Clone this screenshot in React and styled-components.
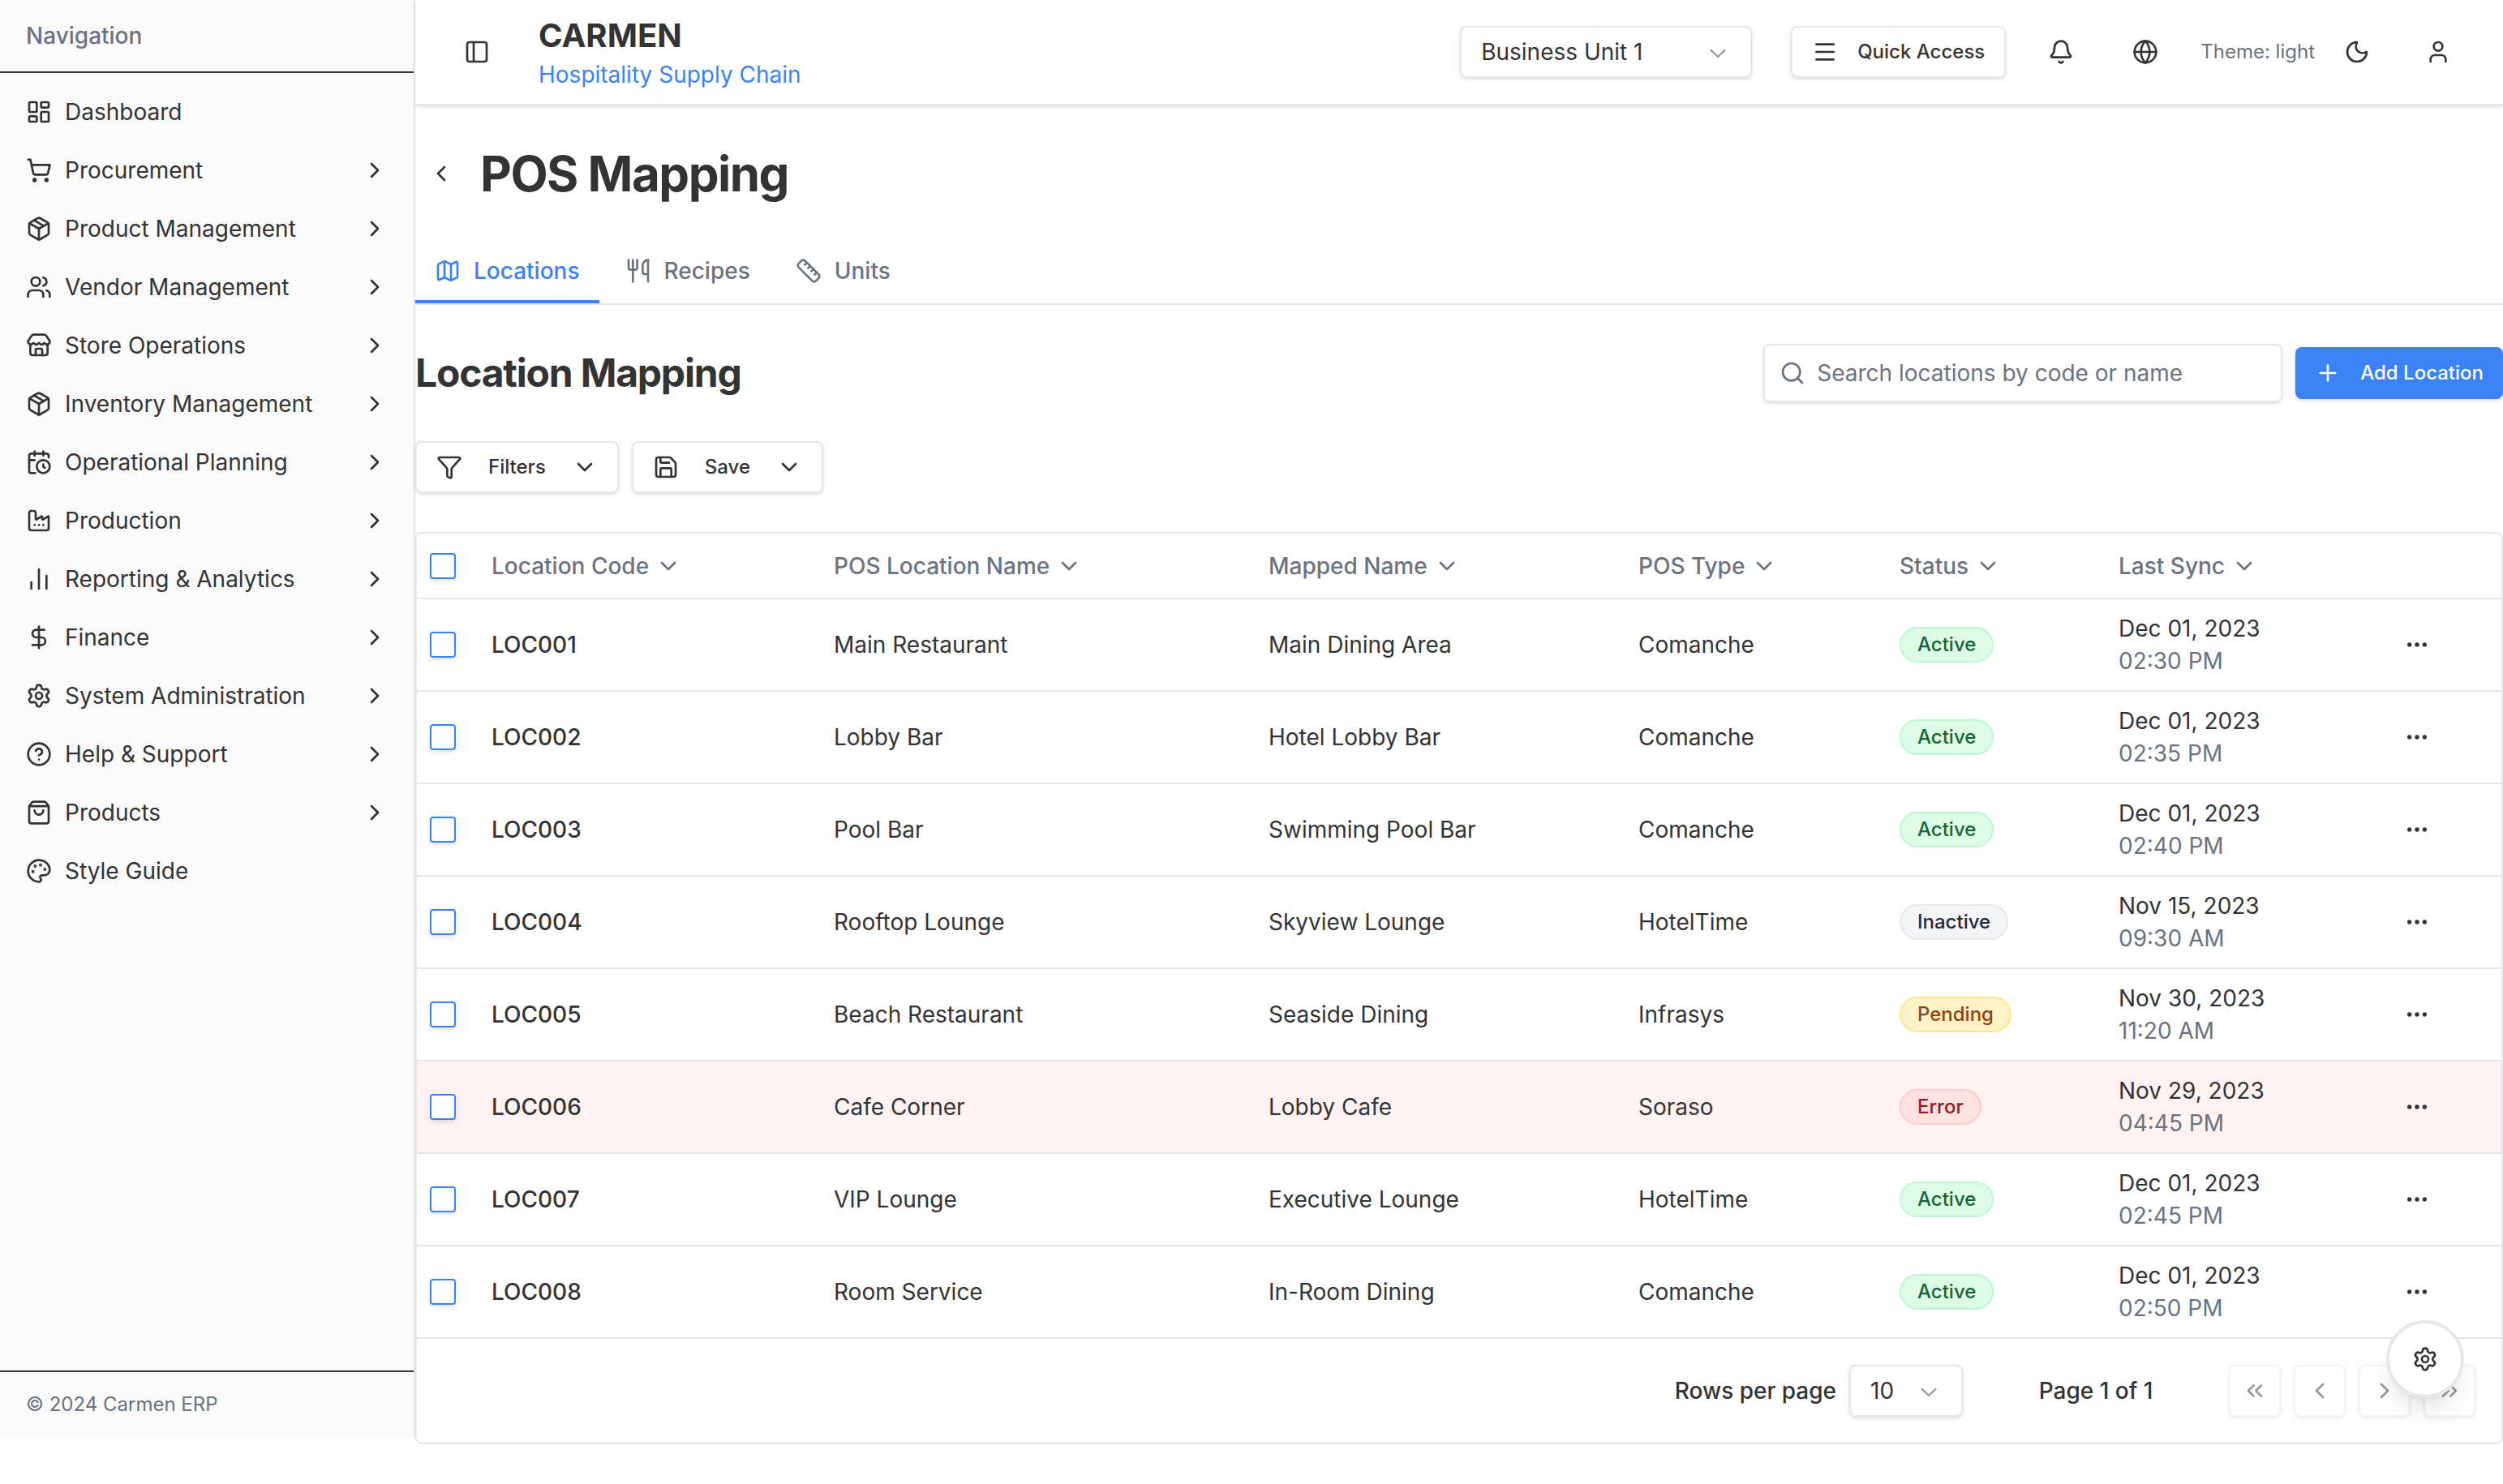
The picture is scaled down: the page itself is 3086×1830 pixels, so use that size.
import React from "react";
import styled, { createGlobalStyle, css } from "styled-components";
import {
  LayoutDashboard, ShoppingCart, Package, Users, Store, CalendarClock, Factory,
  ChartNoAxesColumn, DollarSign, Settings, CircleHelp, ShoppingBag, Palette,
  ChevronRight, ChevronLeft, ChevronDown, ChevronsLeft, ChevronsRight, PanelLeft,
  Menu, Bell, Globe, Moon, User, Map as MapIcon, Utensils, Ruler, Search, Plus,
  Funnel, Save, Ellipsis,
} from "lucide-react";

const color = {
  ink: "#333333",
  muted: "#6b7280",
  line: "#e5e7eb",
  blue: "#3b82f6",
  panel: "#fafafa",
};

const shadowSm = "0 2px 6px 0 rgba(0, 0, 0, 0.1), 0 2px 4px -2px rgba(0, 0, 0, 0.1)";

const GlobalStyle = createGlobalStyle`
  *, *::before, *::after { box-sizing: border-box; }
  body {
    margin: 0;
    background: #ffffff;
    color: ${color.ink};
    font-family: Inter, "Liberation Sans", sans-serif;
    font-size: 28px;
    line-height: 40px;
    -webkit-font-smoothing: antialiased;
  }
  button, input, select { font: inherit; color: inherit; margin: 0; }
  button { cursor: pointer; background: none; border: 0; padding: 0; }
  h1, h2, p, ul { margin: 0; padding: 0; }
  ul { list-style: none; }
  svg { flex-shrink: 0; display: block; }
`;

const Shell = styled.div`
  display: flex;
  align-items: flex-start;
  min-height: 100vh;
`;

/* ---------- sidebar ---------- */

const Sidebar = styled.aside`
  display: flex;
  flex-direction: column;
  flex: 0 0 512px;
  height: calc(100vh - 58px);
  background: ${color.panel};
  border-right: 2px solid ${color.line};
`;

const SidebarTitle = styled.p`
  padding: 24px 32px;
  border-bottom: 2px solid ${color.ink};
  color: ${color.muted};
  font-weight: 500;
`;

const NavList = styled.ul`
  flex: 1;
  padding: 12px 0;
`;

const NavLink = styled.a`
  display: flex;
  align-items: center;
  gap: 16px;
  padding: 16px 32px;
  color: ${color.ink};
  text-decoration: none;
`;

const NavText = styled.span`
  flex: 1;
`;

const SidebarFooter = styled.p`
  padding: 24px 32px;
  border-top: 2px solid ${color.ink};
  color: ${color.muted};
  font-size: 24px;
  line-height: 32px;
`;

/* ---------- header ---------- */

const Content = styled.div`
  flex: 1;
  min-width: 0;
`;

const Header = styled.header`
  display: flex;
  align-items: center;
  justify-content: space-between;
  height: 130px;
  padding: 0 48px;
  border-bottom: 2px solid ${color.line};
  box-shadow: ${shadowSm};
`;

const HeaderSide = styled.div`
  display: flex;
  align-items: center;
  gap: ${(p) => p.$gap}px;
`;

const Brand = styled.div`
  display: flex;
  flex-direction: column;
`;

const BrandName = styled.span`
  font-size: 40px;
  line-height: 56px;
  font-weight: 700;
`;

const BrandLine = styled.span`
  color: ${color.blue};
`;

const IconButton = styled.button`
  display: inline-flex;
  align-items: center;
  justify-content: center;
  width: ${(p) => p.$size}px;
  height: ${(p) => p.$size}px;
  border-radius: 8px;
`;

const SelectBox = styled.div`
  display: grid;
  align-items: center;
  width: ${(p) => p.$width}px;
  height: 64px;

  & > * { grid-area: 1 / 1; }
  & > svg {
    justify-self: end;
    margin-right: 26px;
    opacity: 0.5;
    pointer-events: none;
  }
`;

const Select = styled.select`
  appearance: none;
  width: 100%;
  height: 100%;
  padding: 0 24px;
  background: #ffffff;
  border: 2px solid ${color.line};
  border-radius: 8px;
  box-shadow: ${shadowSm};
`;

const Button = styled.button`
  display: inline-flex;
  align-items: center;
  gap: ${(p) => p.$gap || 24}px;
  height: 64px;
  padding: 0 24px;
  border-radius: 8px;
  font-size: 24px;
  line-height: 32px;
  font-weight: 500;
  white-space: nowrap;
  box-shadow: ${shadowSm};
  ${(p) =>
    p.$primary
      ? css`
          background: ${color.blue};
          color: #ffffff;
        `
      : css`
          background: #ffffff;
          border: 2px solid ${color.line};
        `}
`;

const ThemeGroup = styled.div`
  display: flex;
  align-items: center;
  gap: 16px;
  color: ${color.muted};
  font-size: 24px;

  button { color: ${color.ink}; }
`;

/* ---------- page ---------- */

const Page = styled.main`
  display: flex;
  flex-direction: column;
  gap: 48px;
  padding: 48px 0;
`;

const TitleRow = styled.div`
  display: flex;
  align-items: center;
  gap: 16px;
`;

const PageTitle = styled.h1`
  font-size: 60px;
  line-height: 72px;
  font-weight: 700;
  letter-spacing: -0.025em;
`;

const Tabs = styled.div`
  display: flex;
  gap: 8px;
  border-bottom: 2px solid ${color.line};
`;

const Tab = styled.button`
  display: flex;
  align-items: center;
  gap: 16px;
  padding: 16px 24px;
  border-bottom: 4px solid ${(p) => (p.$active ? color.blue : "transparent")};
  color: ${(p) => (p.$active ? color.blue : color.muted)};
  font-weight: 500;
`;

const SectionHead = styled.div`
  display: flex;
  align-items: center;
  justify-content: space-between;
`;

const SectionTitle = styled.h2`
  font-size: 48px;
  line-height: 64px;
  font-weight: 700;
  letter-spacing: -0.025em;
`;

const Row = styled.div`
  display: flex;
  align-items: center;
  gap: 16px;
`;

const SearchBox = styled.label`
  display: grid;
  align-items: center;
  width: 640px;
  height: 72px;

  & > * { grid-area: 1 / 1; }
  & > svg {
    z-index: 1;
    margin-left: 20px;
    color: ${color.muted};
  }
`;

const SearchInput = styled.input`
  width: 100%;
  height: 100%;
  padding: 0 24px 0 64px;
  background: #ffffff;
  border: 2px solid ${color.line};
  border-radius: 8px;
  box-shadow: ${shadowSm};

  &::placeholder { color: ${color.muted}; opacity: 1; }
`;

/* ---------- table ---------- */

const TableCard = styled.section`
  border: 2px solid ${color.line};
  border-radius: 8px;
`;

const Table = styled.table`
  width: 100%;
  table-layout: fixed;
  border-collapse: separate;
  border-spacing: 0;
`;

const HeadCell = styled.th`
  height: 81px;
  padding: 0 16px;
  border-bottom: 2px solid ${color.line};
  text-align: left;
`;

const SortButton = styled.button`
  display: flex;
  align-items: center;
  gap: 8px;
  color: ${color.muted};
  font-weight: 500;
`;

const BodyRow = styled.tr`
  background: ${(p) => (p.$error ? "#fef2f2" : "#ffffff")};
`;

const Cell = styled.td`
  padding: 16px;
  border-bottom: 2px solid ${color.line};
  font-weight: ${(p) => (p.$strong ? 500 : 400)};
`;

const Checkbox = styled.input.attrs({ type: "checkbox" })`
  appearance: none;
  display: block;
  width: 32px;
  height: 32px;
  background: #ffffff;
  border: 2px solid ${color.blue};
  border-radius: 4px;
  box-shadow: ${shadowSm};

  &:checked { background: ${color.blue}; }
`;

const badgeTones = {
  Active: css`background: #dcfce7; border-color: #bbf7d0; color: #166534;`,
  Inactive: css`background: #f3f4f6; border-color: #e5e7eb; color: #1f2937;`,
  Pending: css`background: #fef3c7; border-color: #fde68a; color: #92400e;`,
  Error: css`background: #fee2e2; border-color: #fecaca; color: #991b1b;`,
};

const Badge = styled.span`
  display: block;
  width: fit-content;
  padding: 4px 20px;
  border: 2px solid;
  border-radius: 22px;
  font-size: 24px;
  line-height: 32px;
  font-weight: 500;
  ${(p) => badgeTones[p.$status]}
`;

const SyncTime = styled.div`
  color: ${color.muted};
`;

const Pagination = styled.footer`
  display: flex;
  align-items: center;
  justify-content: flex-end;
  gap: 64px;
  padding: 32px;
  font-weight: 500;
`;

const PageCount = styled.span`
  width: 200px;
  text-align: center;
`;

const PageButton = styled.button`
  display: flex;
  align-items: center;
  justify-content: center;
  width: 64px;
  height: 64px;
  border: 2px solid ${color.line};
  border-radius: 8px;
  box-shadow: ${shadowSm};
  opacity: 0.5;
`;

const RowsSelect = styled(Select)`
  font-weight: 400;
`;

const SettingsFab = styled.button`
  position: fixed;
  right: 48px;
  bottom: 106px;
  display: flex;
  align-items: center;
  justify-content: center;
  width: 96px;
  height: 96px;
  background: #ffffff;
  border: 4px solid ${color.line};
  border-radius: 50%;
  box-shadow: 0 20px 30px -6px rgba(0, 0, 0, 0.1), 0 8px 12px -8px rgba(0, 0, 0, 0.1);
`;

/* ---------- data ---------- */

const Icon = ({ as: Glyph }) => <Glyph size={32} strokeWidth={2} aria-hidden="true" />;

const SelectChevron = () => (
  <svg width="32" height="32" viewBox="0 0 15 15" fill="currentColor" aria-hidden="true">
    <path
      fillRule="evenodd"
      clipRule="evenodd"
      d="M3.13523 6.15803C3.3241 5.95657 3.64052 5.94637 3.84197 6.13523L7.5 9.56464L11.158 6.13523C11.3595 5.94637 11.6759 5.95657 11.8648 6.15803C12.0536 6.35949 12.0434 6.67591 11.842 6.86477L7.84197 10.6148C7.64964 10.7951 7.35036 10.7951 7.15803 10.6148L3.15803 6.86477C2.95657 6.67591 2.94637 6.35949 3.13523 6.15803Z"
    />
  </svg>
);

const navItems = [
  ["Dashboard", LayoutDashboard, false],
  ["Procurement", ShoppingCart, true],
  ["Product Management", Package, true],
  ["Vendor Management", Users, true],
  ["Store Operations", Store, true],
  ["Inventory Management", Package, true],
  ["Operational Planning", CalendarClock, true],
  ["Production", Factory, true],
  ["Reporting & Analytics", ChartNoAxesColumn, true],
  ["Finance", DollarSign, true],
  ["System Administration", Settings, true],
  ["Help & Support", CircleHelp, true],
  ["Products", ShoppingBag, true],
  ["Style Guide", Palette, false],
];

const tabs = [
  ["Locations", MapIcon],
  ["Recipes", Utensils],
  ["Units", Ruler],
];

const columns = [
  ["Location Code", 422],
  ["POS Location Name", 536],
  ["Mapped Name", 456],
  ["POS Type", 322],
  ["Status", 270],
  ["Last Sync", 336],
];

const locations = [
  ["LOC001", "Main Restaurant", "Main Dining Area", "Comanche", "Active", "Dec 01, 2023", "02:30 PM"],
  ["LOC002", "Lobby Bar", "Hotel Lobby Bar", "Comanche", "Active", "Dec 01, 2023", "02:35 PM"],
  ["LOC003", "Pool Bar", "Swimming Pool Bar", "Comanche", "Active", "Dec 01, 2023", "02:40 PM"],
  ["LOC004", "Rooftop Lounge", "Skyview Lounge", "HotelTime", "Inactive", "Nov 15, 2023", "09:30 AM"],
  ["LOC005", "Beach Restaurant", "Seaside Dining", "Infrasys", "Pending", "Nov 30, 2023", "11:20 AM"],
  ["LOC006", "Cafe Corner", "Lobby Cafe", "Soraso", "Error", "Nov 29, 2023", "04:45 PM"],
  ["LOC007", "VIP Lounge", "Executive Lounge", "HotelTime", "Active", "Dec 01, 2023", "02:45 PM"],
  ["LOC008", "Room Service", "In-Room Dining", "Comanche", "Active", "Dec 01, 2023", "02:50 PM"],
];

const pageButtons = [
  ["First page", ChevronsLeft],
  ["Previous page", ChevronLeft],
  ["Next page", ChevronRight],
  ["Last page", ChevronsRight],
];

/* ---------- sections ---------- */

function SideNav() {
  return (
    <Sidebar>
      <SidebarTitle>Navigation</SidebarTitle>
      <NavList>
        {navItems.map(([label, glyph, expandable]) => (
          <li key={label}>
            <NavLink href="#">
              <Icon as={glyph} />
              <NavText>{label}</NavText>
              {expandable && <Icon as={ChevronRight} />}
            </NavLink>
          </li>
        ))}
      </NavList>
      <SidebarFooter>© 2024 Carmen ERP</SidebarFooter>
    </Sidebar>
  );
}

function TopBar() {
  return (
    <Header>
      <HeaderSide $gap={48}>
        <IconButton $size={56} aria-label="Toggle sidebar"><Icon as={PanelLeft} /></IconButton>
        <Brand>
          <BrandName>CARMEN</BrandName>
          <BrandLine>Hospitality Supply Chain</BrandLine>
        </Brand>
      </HeaderSide>
      <HeaderSide $gap={48}>
        <SelectBox $width={360}>
          <Select aria-label="Business unit"><option>Business Unit 1</option></Select>
          <SelectChevron />
        </SelectBox>
        <HeaderSide $gap={32}>
          <Button><Icon as={Menu} />Quick Access</Button>
          <IconButton $size={72} aria-label="Notifications"><Icon as={Bell} /></IconButton>
          <IconButton $size={72} aria-label="Language"><Icon as={Globe} /></IconButton>
          <ThemeGroup>
            <span>Theme: light</span>
            <IconButton $size={72} aria-label="Switch theme"><Icon as={Moon} /></IconButton>
          </ThemeGroup>
          <IconButton $size={64} aria-label="Account"><Icon as={User} /></IconButton>
        </HeaderSide>
      </HeaderSide>
    </Header>
  );
}

function LocationTable() {
  return (
    <TableCard>
      <Table>
        <colgroup>
          <col width="76" />
          {columns.map(([label, width]) => <col key={label} width={width} />)}
          <col width="152" />
        </colgroup>
        <thead>
          <tr>
            <HeadCell scope="col"><Checkbox aria-label="Select all" /></HeadCell>
            {columns.map(([label]) => (
              <HeadCell key={label} scope="col">
                <SortButton>{label}<Icon as={ChevronDown} /></SortButton>
              </HeadCell>
            ))}
            <HeadCell scope="col" aria-label="Actions" />
          </tr>
        </thead>
        <tbody>
          {locations.map(([code, name, mapped, type, status, date, time]) => (
            <BodyRow key={code} $error={status === "Error"}>
              <Cell><Checkbox aria-label={`Select ${code}`} /></Cell>
              <Cell $strong>{code}</Cell>
              <Cell>{name}</Cell>
              <Cell>{mapped}</Cell>
              <Cell>{type}</Cell>
              <Cell><Badge $status={status}>{status}</Badge></Cell>
              <Cell>
                <div>{date}</div>
                <SyncTime>{time}</SyncTime>
              </Cell>
              <Cell>
                <IconButton $size={64} aria-label={`Actions for ${code}`}><Icon as={Ellipsis} /></IconButton>
              </Cell>
            </BodyRow>
          ))}
        </tbody>
      </Table>
      <Pagination>
        <Row>
          <label htmlFor="rows-per-page">Rows per page</label>
          <SelectBox $width={140}>
            <RowsSelect id="rows-per-page"><option>10</option></RowsSelect>
            <SelectChevron />
          </SelectBox>
        </Row>
        <PageCount>Page 1 of 1</PageCount>
        <Row>
          {pageButtons.map(([label, glyph]) => (
            <PageButton key={label} aria-label={label}><Icon as={glyph} /></PageButton>
          ))}
        </Row>
      </Pagination>
    </TableCard>
  );
}

export default function App() {
  return (
    <>
      <GlobalStyle />
      <Shell>
        <SideNav />
        <Content>
          <TopBar />
          <Page>
            <TitleRow>
              <IconButton $size={64} aria-label="Back"><Icon as={ChevronLeft} /></IconButton>
              <PageTitle>POS Mapping</PageTitle>
            </TitleRow>
            <Tabs role="tablist">
              {tabs.map(([label, glyph], i) => (
                <Tab key={label} role="tab" aria-selected={i === 0} $active={i === 0}>
                  <Icon as={glyph} />{label}
                </Tab>
              ))}
            </Tabs>
            <SectionHead>
              <SectionTitle>Location Mapping</SectionTitle>
              <Row>
                <SearchBox>
                  <Icon as={Search} />
                  <SearchInput type="search" aria-label="Search locations" placeholder="Search locations by code or name" />
                </SearchBox>
                <Button $primary><Icon as={Plus} />Add Location</Button>
              </Row>
            </SectionHead>
            <Row>
              <Button $gap={32}><Icon as={Funnel} />Filters<Icon as={ChevronDown} /></Button>
              <Button $gap={32}><Icon as={Save} />Save<Icon as={ChevronDown} /></Button>
            </Row>
            <LocationTable />
          </Page>
        </Content>
      </Shell>
      <SettingsFab aria-label="Settings"><Icon as={Settings} /></SettingsFab>
    </>
  );
}
